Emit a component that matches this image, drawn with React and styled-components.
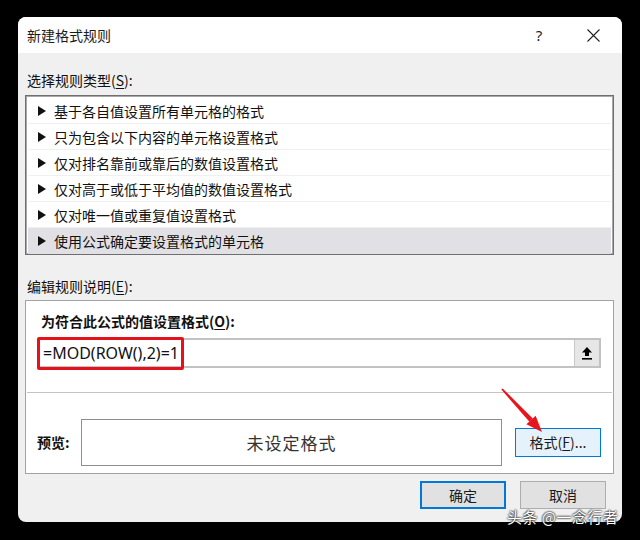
import React from "react";
import styled, { createGlobalStyle } from "styled-components";

const GlobalStyle = createGlobalStyle`
  body {
    margin: 0;
    background: #000;
    font-family: "Noto Sans CJK SC", "Noto Sans", sans-serif;
  }
`;

const Stage = styled.div`
  position: relative;
  width: 640px;
  height: 540px;
  padding: 17px 0 0 18px;
  box-sizing: border-box;
  overflow: hidden;
`;

const Dialog = styled.div`
  width: 604px;
  height: 505px;
  background: #f0f0f0;
  border-radius: 8px;
  overflow: hidden;
  display: flex;
  flex-direction: column;
`;

const TitleBar = styled.div`
  height: 36px;
  flex: none;
  background: #fff;
  display: flex;
  align-items: center;
  padding: 0 9px;
`;

const Title = styled.span`
  flex: 1;
  font-size: 14px;
  color: #1b1b1b;
`;

const Caption = styled.div`
  width: 40px;
  height: 36px;
  display: flex;
  align-items: center;
  justify-content: center;
  color: #222;
  font-size: 15px;
  font-family: "Noto Sans", sans-serif;
  margin-left: ${(p) => p.$gap || 0}px;
`;

const Body = styled.div`
  flex: 1;
  display: flex;
  flex-direction: column;
  padding: 17px 8px 0 7px;
`;

const Label = styled.div`
  height: 20px;
  line-height: 20px;
  font-size: 14px;
  color: #111;
  padding-left: 2px;
  font-weight: ${(p) => (p.$bold ? 700 : 400)};
  margin-bottom: ${(p) => p.$mb || 0}px;
  & u {
    text-underline-offset: 2px;
  }
`;

const List = styled.div`
  height: 160px;
  box-sizing: border-box;
  border: 1px solid #6f6f6f;
  box-shadow: inset 0 0 0 1px #a8a8a8;
  background: #fff;
  padding: 2px 2px 0;
  display: flex;
  flex-direction: column;
  margin-bottom: 21px;
`;

const Row = styled.div`
  height: 26px;
  flex: none;
  display: flex;
  align-items: center;
  gap: 8px;
  padding-left: 10px;
  font-size: 14px;
  color: #111;
  box-sizing: border-box;
  border-bottom: ${(p) => (p.$last ? "none" : "1px solid #f0f0f0")};
  background: ${(p) => (p.$selected ? "#e1e1e5" : "#fff")};
`;

const Group = styled.div`
  height: 174px;
  box-sizing: border-box;
  margin-top: 4px;
  border: 1px solid #a3a3a3;
  background: #fff;
  display: flex;
  flex-direction: column;
`;

const FormulaSection = styled.div`
  padding: 10px 12px 0;
  height: 92px;
  box-sizing: border-box;
  display: flex;
  flex-direction: column;
  gap: 7px;
  border-bottom: 1px solid #c4c4c4;
  margin: 0 1px;
`;

const InputWrap = styled.div`
  position: relative;
  height: 30px;
  box-sizing: border-box;
  border: 2px solid #c2c2c2;
  display: flex;
  align-items: center;
  margin: 0 -1px;
`;

const Formula = styled.span`
  flex: 1;
  font-family: "Noto Sans", sans-serif;
  font-size: 16px;
  color: #111;
  padding-left: 3px;
  display: flex;
  align-items: center;
`;

const Caret = styled.span`
  width: 1px;
  height: 15px;
  background: #000;
  margin-left: 2px;
`;

const Highlight = styled.div`
  position: absolute;
  left: -3px;
  top: -3px;
  width: 147px;
  height: 33px;
  box-sizing: border-box;
  border: 3px solid #e5121b;
  border-radius: 2px;
`;

const CollapseButton = styled.div`
  width: 24px;
  height: 26px;
  background: #e6e6e6;
  border-left: 1px solid #c8c8c8;
  display: flex;
  align-items: center;
  justify-content: center;
`;

const PreviewSection = styled.div`
  flex: 1;
  display: flex;
  align-items: center;
  padding: 18px 12px 0 11px;
  box-sizing: border-box;
`;

const PreviewLabel = styled.span`
  width: 44px;
  font-size: 14px;
  font-weight: 700;
  color: #111;
`;

const PreviewBox = styled.div`
  width: 421px;
  height: 47px;
  box-sizing: border-box;
  border: 1px solid #8e8e8e;
  display: flex;
  align-items: center;
  justify-content: center;
  font-size: 17px;
  color: #333;
  letter-spacing: 1px;
`;

const Button = styled.div`
  width: ${(p) => p.$w}px;
  height: ${(p) => p.$h}px;
  box-sizing: border-box;
  display: flex;
  align-items: center;
  justify-content: center;
  font-size: 14px;
  color: #1a1a1a;
  background: ${(p) => p.$bg || "#e1e1e1"};
  border: ${(p) => p.$border || "1px solid #adadad"};
  & u {
    text-underline-offset: 2px;
  }
`;

const Footer = styled.div`
  display: flex;
  justify-content: flex-end;
  gap: 14px;
  margin: 7px 8px 0 0;
`;

const Arrow = styled.svg`
  position: absolute;
  left: 0;
  top: 0;
  pointer-events: none;
`;

const Watermark = styled.div`
  position: absolute;
  left: 507px;
  top: 506px;
  font-size: 15px;
  color: #fff;
  letter-spacing: 0.5px;
  text-shadow: 0 0 2px #000, 0 0 2px #000;
`;

const rules = [
  "基于各自值设置所有单元格的格式",
  "只为包含以下内容的单元格设置格式",
  "仅对排名靠前或靠后的数值设置格式",
  "仅对高于或低于平均值的数值设置格式",
  "仅对唯一值或重复值设置格式",
  "使用公式确定要设置格式的单元格",
];

const Triangle = () => (
  <svg width="8" height="10" viewBox="0 0 8 10">
    <polygon points="0,0 8,5 0,10" fill="#111" />
  </svg>
);

export default function App() {
  return (
    <>
      <GlobalStyle />
      <Stage>
        <Dialog>
          <TitleBar>
            <Title>新建格式规则</Title>
            <Caption>?</Caption>
            <Caption $gap={14}>
              <svg width="13" height="13" viewBox="0 0 13 13">
                <path d="M0.5 0.5L12.5 12.5M12.5 0.5L0.5 12.5" stroke="#222" strokeWidth="1.1" />
              </svg>
            </Caption>
          </TitleBar>
          <Body>
            <Label $mb={5}>
              选择规则类型(<u>S</u>):
            </Label>
            <List>
              {rules.map((r, i) => (
                <Row key={r} $selected={i === rules.length - 1} $last={i === rules.length - 1}>
                  <Triangle />
                  {r}
                </Row>
              ))}
            </List>
            <Label>
              编辑规则说明(<u>E</u>):
            </Label>
            <Group>
              <FormulaSection>
                <Label $bold>
                  为符合此公式的值设置格式(<u>O</u>):
                </Label>
                <InputWrap>
                  <Formula>
                    =MOD(ROW(),2)=1
                    <Caret />
                  </Formula>
                  <CollapseButton>
                    <svg width="12" height="14" viewBox="0 0 12 14">
                      <path d="M6 1L1 6.5H4V10H8V6.5H11Z" fill="#000" />
                      <rect x="1" y="12" width="10" height="1.6" fill="#000" />
                    </svg>
                  </CollapseButton>
                  <Highlight />
                </InputWrap>
              </FormulaSection>
              <PreviewSection>
                <PreviewLabel>预览:</PreviewLabel>
                <PreviewBox>未设定格式</PreviewBox>
                <div style={{ flex: 1 }} />
                <Button $w={86} $h={29} $bg="#e5f1fb" $border="1px solid #0078d7">
                  格式(<u>F</u>)...
                </Button>
              </PreviewSection>
            </Group>
            <Footer>
              <Button $w={86} $h={28} $border="2px solid #0078d7">
                确定
              </Button>
              <Button $w={86} $h={28}>
                取消
              </Button>
            </Footer>
          </Body>
        </Dialog>
        <Arrow width="640" height="540" viewBox="0 0 640 540">
          <polygon points="501.3,389.6 502.7,388.4 532.8,418.4 529.4,421.8" fill="#e8141c" />
          <polygon points="542,432 526.4,424.3 535.6,415.7" fill="#e8141c" />
        </Arrow>
        <Watermark>头条 @一念行者</Watermark>
      </Stage>
    </>
  );
}
